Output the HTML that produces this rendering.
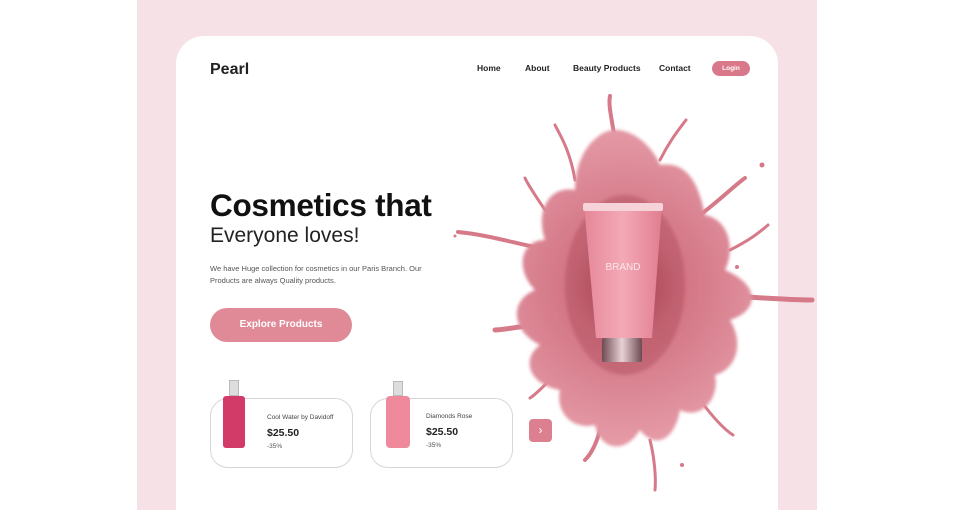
<!DOCTYPE html>
<html><head><meta charset="utf-8"><style>
*{margin:0;padding:0;box-sizing:border-box}
html,body{width:954px;height:510px;overflow:hidden}
body{background:#fff;font-family:"Liberation Sans",sans-serif;position:relative}
.bg{position:absolute;left:137px;top:0;width:680px;height:510px;background:#f6e2e6}
.card{position:absolute;left:176px;top:36px;width:602px;height:474px;background:#fff;border-radius:28px 28px 0 0}
.abs{position:absolute}
.nav{font-size:8.5px;font-weight:bold;color:#222;top:63px}
.login{left:712px;top:61px;width:38px;height:15px;border-radius:8px;background:#d9788a;color:#fff;font-size:6.5px;font-weight:bold;text-align:center;line-height:15px}
.prod{border:1px solid #d6d6d6;border-radius:18px;width:143px;height:70px;top:398px}
.pname{font-size:6.5px;color:#444}
.price{font-size:10.5px;font-weight:bold;color:#222}
.disc{font-size:6.5px;color:#555}
</style></head><body>
<div class="bg"></div>
<div class="card"></div>
<div class="abs" style="left:210px;top:61px;font-size:16px;font-weight:bold;color:#222">Pearl</div>
<div class="abs nav" style="left:477px">Home</div>
<div class="abs nav" style="left:525px">About</div>
<div class="abs nav" style="left:573px">Beauty Products</div>
<div class="abs nav" style="left:659px">Contact</div>
<div class="abs login">Login</div>

<div class="abs" style="left:210px;top:187px;font-size:31.5px;font-weight:bold;color:#111;letter-spacing:-0.3px">Cosmetics that</div>
<div class="abs" style="left:210px;top:224px;font-size:21px;color:#222">Everyone loves!</div>
<div class="abs" style="left:210px;top:263px;font-size:7.5px;color:#555;line-height:12px;width:240px">We have Huge collection for cosmetics in our Paris Branch. Our Products are always Quality products.</div>
<div class="abs" style="left:210px;top:308px;width:142px;height:34px;border-radius:17px;background:#e08a97;color:#fff;font-size:10px;font-weight:bold;text-align:center;line-height:34px">Explore Products</div>

<svg class="abs" style="left:0;top:0" width="954" height="510">
<defs>
<radialGradient id="g" cx="625" cy="285" r="180" gradientUnits="userSpaceOnUse">
<stop offset="0" stop-color="#a8404f"/><stop offset="0.3" stop-color="#d27383"/><stop offset="1" stop-color="#e9a3ae"/></radialGradient>
<linearGradient id="t" x1="0" x2="1"><stop offset="0" stop-color="#e58799"/><stop offset="0.5" stop-color="#f4a9b6"/><stop offset="1" stop-color="#e07e90"/></linearGradient>
<linearGradient id="c" x1="0" x2="1"><stop offset="0" stop-color="#6d4a52"/><stop offset="0.5" stop-color="#e8d2d6"/><stop offset="1" stop-color="#6d4a52"/></linearGradient>
<filter id="b"><feGaussianBlur stdDeviation="1.5"/></filter>
</defs>
<g fill="none" stroke="#d67a8a" stroke-linecap="round">
<path stroke-width="4" d="M615,140 C612,120 608,105 610,96"/>
<path stroke-width="3" d="M575,180 C570,150 560,135 555,125"/>
<path stroke-width="3" d="M660,160 C670,140 680,128 686,120"/>
<path stroke-width="4" d="M700,215 C720,200 735,185 745,178"/>
<path stroke-width="5" d="M720,295 C760,298 790,300 812,300"/>
<path stroke-width="3" d="M730,250 C750,240 760,232 768,225"/>
<path stroke-width="4" d="M550,250 C520,245 490,235 458,232"/>
<path stroke-width="3" d="M545,210 C535,195 528,185 525,178"/>
<path stroke-width="5" d="M560,320 C530,325 505,330 495,330"/>
<path stroke-width="3" d="M560,370 C545,385 535,395 530,398"/>
<path stroke-width="3" d="M650,440 C655,460 656,480 655,490"/>
<path stroke-width="3" d="M700,400 C715,420 725,430 733,435"/>
<path stroke-width="4" d="M600,430 C596,445 590,455 585,460"/>
</g>
<path filter="url(#b)" fill="url(#g)" d="M600,135 C620,120 650,140 660,165 C690,160 700,190 705,215 C730,220 735,250 725,270 C760,285 760,310 730,320 C745,345 735,370 715,375 C720,400 700,420 680,410 C675,440 655,450 640,430 C625,455 600,450 595,425 C575,430 555,415 560,390 C530,385 520,360 540,345 C510,330 510,300 535,290 C515,270 520,240 545,240 C535,210 550,185 575,190 C575,165 585,145 600,135 Z"/>
<ellipse cx="625" cy="285" rx="60" ry="90" fill="#a3404f" opacity="0.35" filter="url(#b)"/>
<path d="M584,205 L662,205 L652,338 L596,338 Z" fill="url(#t)"/>
<rect x="583" y="203" width="80" height="8" rx="2" fill="#f6d3d9"/>
<rect x="602" y="338" width="40" height="24" rx="2" fill="url(#c)"/>
<text x="623" y="270" font-size="10" fill="#fbe6ea" text-anchor="middle" font-family="Liberation Sans">BRAND</text>
<circle cx="762" cy="165" r="2.5" fill="#d67888"/><circle cx="737" cy="267" r="2" fill="#d67888"/><circle cx="455" cy="236" r="1.5" fill="#d67888"/><circle cx="682" cy="465" r="2" fill="#d67888"/>
</svg>

<div class="abs prod" style="left:210px"></div>
<div class="abs" style="left:223px;top:380px;width:22px;height:68px">
 <div class="abs" style="left:6px;top:0;width:10px;height:16px;background:#ddd;border:1px solid #bbb"></div>
 <div class="abs" style="left:0;top:16px;width:22px;height:52px;background:#d23a68;border-radius:3px"></div>
</div>
<div class="abs pname" style="left:267px;top:414px">Cool Water by Davidoff</div>
<div class="abs price" style="left:267px;top:427px">$25.50</div>
<div class="abs disc" style="left:267px;top:443px">-35%</div>

<div class="abs prod" style="left:370px"></div>
<div class="abs" style="left:386px;top:381px;width:24px;height:67px">
 <div class="abs" style="left:7px;top:0;width:10px;height:15px;background:#ddd;border:1px solid #bbb"></div>
 <div class="abs" style="left:0;top:15px;width:24px;height:52px;background:#ee8a9c;border-radius:4px"></div>
</div>
<div class="abs pname" style="left:426px;top:413px">Diamonds Rose</div>
<div class="abs price" style="left:426px;top:426px">$25.50</div>
<div class="abs disc" style="left:426px;top:442px">-35%</div>

<div class="abs" style="left:529px;top:419px;width:23px;height:23px;border-radius:4px;background:#dc7f8e;color:#fff;text-align:center;line-height:22px;font-size:12px">›</div>
</body></html>
